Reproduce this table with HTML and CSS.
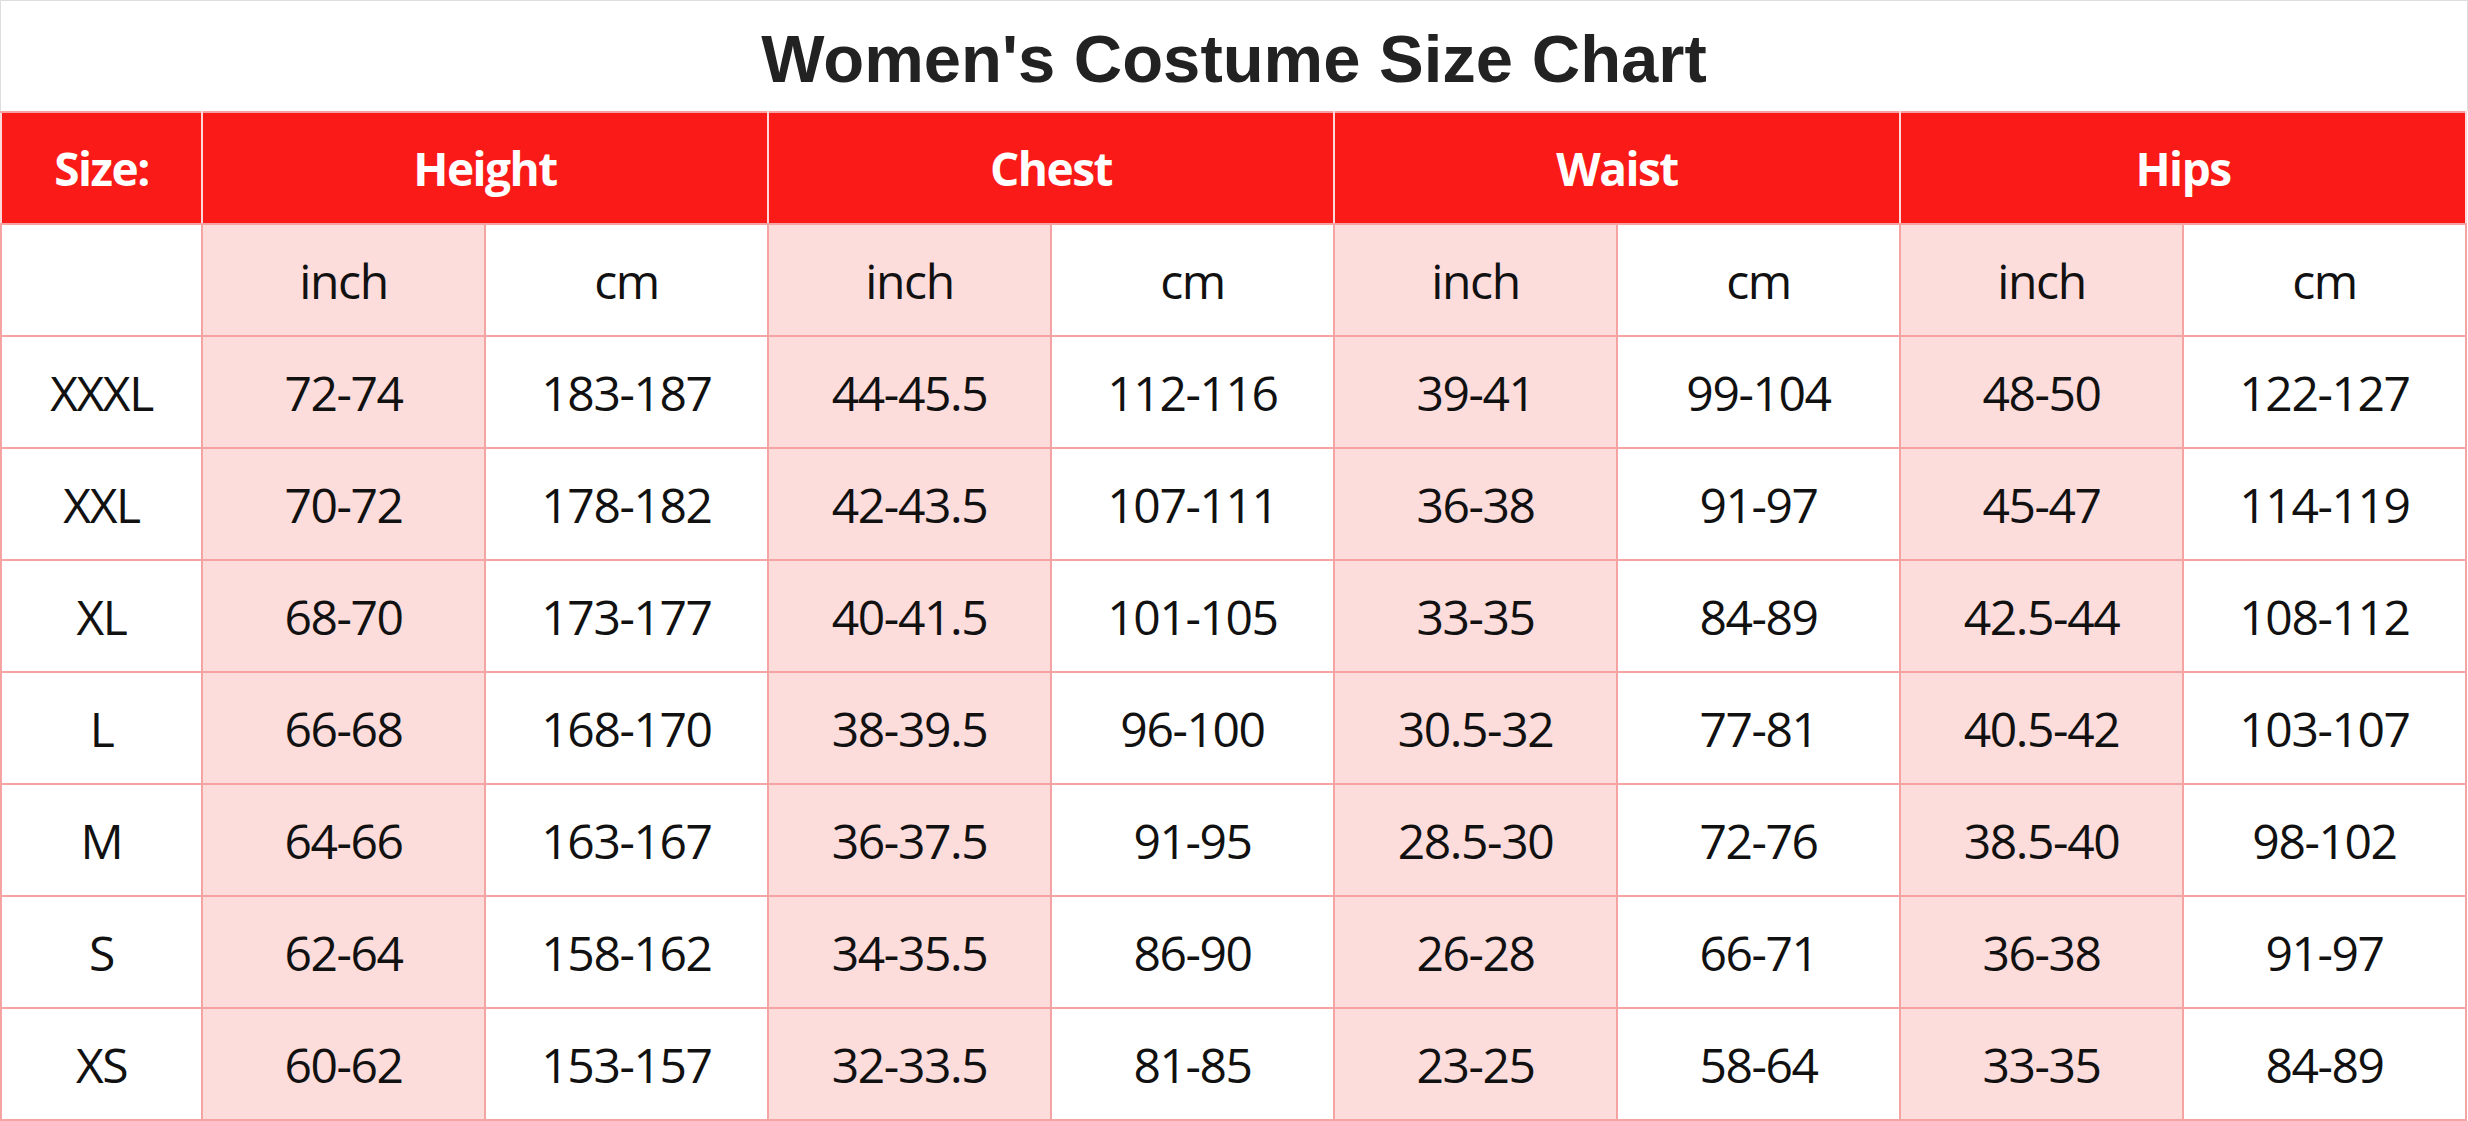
FILE: index.html
```html
<!DOCTYPE html>
<html lang="en">
<head>
<meta charset="utf-8">
<title>Women's Costume Size Chart</title>
<link rel="stylesheet" href="styles.css">
</head>
<body>
<div class="chart">
  <div class="title">Women's Costume Size Chart</div>
  <table class="sizes">
    <colgroup>
      <col class="c-size">
      <col><col><col><col><col><col><col><col>
    </colgroup>
    <thead>
      <tr class="head">
        <th>Size:</th>
        <th colspan="2">Height</th>
        <th colspan="2">Chest</th>
        <th colspan="2">Waist</th>
        <th colspan="2">Hips</th>
      </tr>
    </thead>
    <tbody>
      <tr>
        <td></td>
        <td class="in">inch</td><td>cm</td>
        <td class="in">inch</td><td>cm</td>
        <td class="in">inch</td><td>cm</td>
        <td class="in">inch</td><td>cm</td>
      </tr>
      <tr><td>XXXL</td><td class="in">72-74</td><td>183-187</td><td class="in">44-45.5</td><td>112-116</td><td class="in">39-41</td><td>99-104</td><td class="in">48-50</td><td>122-127</td></tr>
      <tr><td>XXL</td><td class="in">70-72</td><td>178-182</td><td class="in">42-43.5</td><td>107-111</td><td class="in">36-38</td><td>91-97</td><td class="in">45-47</td><td>114-119</td></tr>
      <tr><td>XL</td><td class="in">68-70</td><td>173-177</td><td class="in">40-41.5</td><td>101-105</td><td class="in">33-35</td><td>84-89</td><td class="in">42.5-44</td><td>108-112</td></tr>
      <tr><td>L</td><td class="in">66-68</td><td>168-170</td><td class="in">38-39.5</td><td>96-100</td><td class="in">30.5-32</td><td>77-81</td><td class="in">40.5-42</td><td>103-107</td></tr>
      <tr><td>M</td><td class="in">64-66</td><td>163-167</td><td class="in">36-37.5</td><td>91-95</td><td class="in">28.5-30</td><td>72-76</td><td class="in">38.5-40</td><td>98-102</td></tr>
      <tr><td>S</td><td class="in">62-64</td><td>158-162</td><td class="in">34-35.5</td><td>86-90</td><td class="in">26-28</td><td>66-71</td><td class="in">36-38</td><td>91-97</td></tr>
      <tr><td>XS</td><td class="in">60-62</td><td>153-157</td><td class="in">32-33.5</td><td>81-85</td><td class="in">23-25</td><td>58-64</td><td class="in">33-35</td><td>84-89</td></tr>
    </tbody>
  </table>
</div>
</body>
</html>
```

FILE: styles.css
```css
html, body {
  margin: 0;
  padding: 0;
  background: #ffffff;
}

.chart {
  width: 2468px;
  height: 1121px;
  box-sizing: border-box;
  overflow: hidden;
  background: #ffffff;
}

.title {
  height: 111px;
  box-sizing: border-box;
  border: 1px solid #dedede;
  border-bottom: none;
  display: flex;
  align-items: center;
  justify-content: center;
  font-family: "Liberation Sans", Arial, sans-serif;
  font-weight: bold;
  font-size: 67px;
  color: #222222;
  padding-top: 4px;
}

.sizes {
  width: 2467px;
  border-collapse: collapse;
  table-layout: fixed;
  font-family: "Open Sans", "Noto Sans", sans-serif;
  color: #111111;
}

.sizes .c-size {
  width: 201px;
}

.sizes th,
.sizes td {
  border: 2px solid #f6a3a3;
  padding: 0;
  text-align: center;
  vertical-align: middle;
  white-space: nowrap;
}

.sizes tr {
  height: 112px;
}

.sizes td {
  font-size: 48px;
  font-weight: 400;
  letter-spacing: -1.4px;
}

.sizes td.in {
  background: #fddcdc;
}

.head th {
  background: #fa1a17;
  color: #ffffff;
  font-size: 46px;
  font-weight: 700;
  letter-spacing: -1.5px;
  border-left-color: #ffd9d9;
  border-right-color: #ffd9d9;
}
```
